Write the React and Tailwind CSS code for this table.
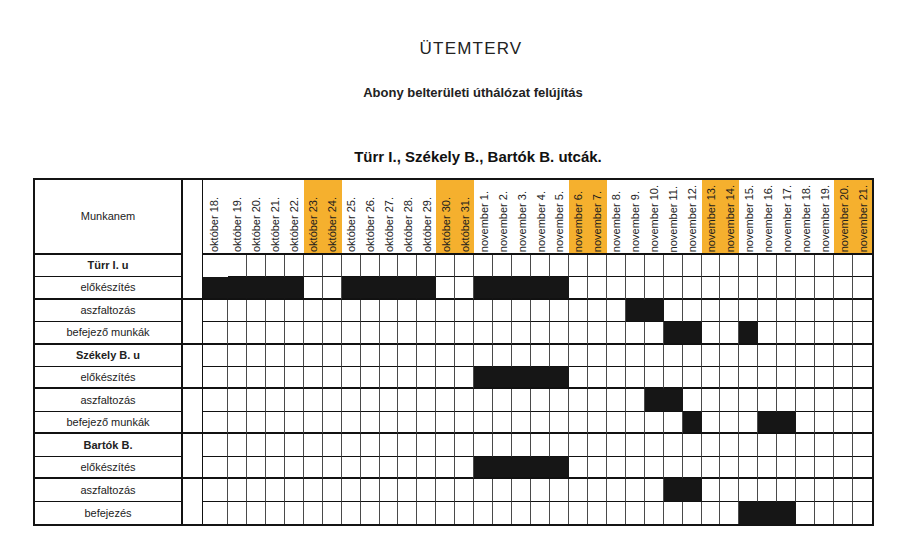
// Ütemterv: Gantt-tábla a Türr, Székely, Bartók utcák felújításához

const dates = [
  ...Array.from({ length: 14 }, (_, i) => `október ${18 + i}.`),
  ...Array.from({ length: 21 }, (_, i) => `november ${1 + i}.`),
];

// hétvégék (narancs fejléc)
const weekend = new Set([5, 6, 12, 13, 19, 20, 26, 27, 33, 34]);

const span = (a, b) => Array.from({ length: b - a + 1 }, (_, i) => a + i);

const rows = [
  { label: "Türr I. u", bold: true, fill: [] },
  { label: "előkészítés", fill: [...span(0, 4), ...span(7, 11), ...span(14, 18)] },
  { label: "aszfaltozás", fill: [22, 23] },
  { label: "befejező munkák", fill: [24, 25, 28] },
  { label: "Székely B. u", bold: true, fill: [] },
  { label: "előkészítés", fill: span(14, 18) },
  { label: "aszfaltozás", fill: [23, 24] },
  { label: "befejező munkák", fill: [25, 29, 30] },
  { label: "Bartók B.", bold: true, fill: [] },
  { label: "előkészítés", fill: span(14, 18) },
  { label: "aszfaltozás", fill: [24, 25] },
  { label: "befejezés", fill: [28, 29, 30] },
];

function HeaderRow() {
  return (
    <>
      <div className="border-r-2 border-b-2 border-r-[#111] border-b-[#111] flex items-center justify-center text-[11px] text-[#222]">
        Munkanem
      </div>
      <div className="border-r border-r-[#111]" />
      {dates.map((d, j) => (
        <div
          key={d}
          className={`border-b-2 border-b-[#111] flex flex-col items-center justify-end pb-[1px] ${
            weekend.has(j) ? "bg-[#f5b02e]" : "bg-white"
          } ${j === 0 ? "pr-[4px]" : ""}`}
        >
          <span className="[writing-mode:vertical-rl] rotate-180 text-[11px] leading-[12px] text-[#1d1d1d] whitespace-nowrap">
            {d}
          </span>
        </div>
      ))}
    </>
  );
}

function TaskRow({ row, i }) {
  const last = i === rows.length - 1;
  const thick = i % 2 === 1 && !last;
  const thin = i % 2 === 0;

  return (
    <>
      <div
        className={`border-r-2 border-r-[#111] border-b-[#111] flex items-center justify-center text-[11px] text-[#222] ${
          row.bold ? "font-bold" : ""
        } ${thick ? "border-b-2" : thin ? "border-b" : ""}`}
      >
        {row.label}
      </div>
      <div className={`border-r border-r-[#111] border-b-[#111] ${thick ? "border-b-2" : ""}`} />
      {dates.map((d, j) => {
        const on = row.fill.includes(j);
        // a szkennelt lapon az első cella itt nyitott
        const open = i === 0 && j === 0;
        return (
          <div
            key={d}
            className={`border-b-[#111] ${
              j < dates.length - 1 && !open ? "border-r" : ""
            } ${on ? "bg-[#161616] border-r-[#161616]" : "bg-white border-r-[#4a4a4a]"} ${
              open ? "" : thick ? "border-b-2" : thin ? "border-b" : ""
            }`}
          />
        );
      })}
    </>
  );
}

export default function App() {
  return (
    <div className="w-[900px] h-[535px] bg-white overflow-hidden font-['Liberation_Sans',Arial,sans-serif] text-[#1a1a1a]">
      <div className="pt-[40px] flex flex-col items-center">
        <h1 className="pl-[42px] text-[17px] leading-[18px] tracking-[1.2px] text-[#222]">ÜTEMTERV</h1>
        <p className="mt-[28px] pl-[46px] text-[13px] leading-[13px] font-bold text-[#222]">
          Abony belterületi úthálózat felújítás
        </p>
        <p className="mt-[50px] pl-[56px] text-[15px] leading-[15px] font-bold text-[#111]">
          Türr I., Székely B., Bartók B. utcák.
        </p>
      </div>

      <div className="mt-[14px] ml-[33px] w-[841px] h-[348px] border-2 border-[#141414] grid grid-cols-[148px_20px_25px_repeat(34,minmax(0,1fr))] grid-rows-[75px_repeat(12,minmax(0,1fr))]">
        <HeaderRow />
        {rows.map((row, i) => (
          <TaskRow key={i} row={row} i={i} />
        ))}
      </div>
    </div>
  );
}
